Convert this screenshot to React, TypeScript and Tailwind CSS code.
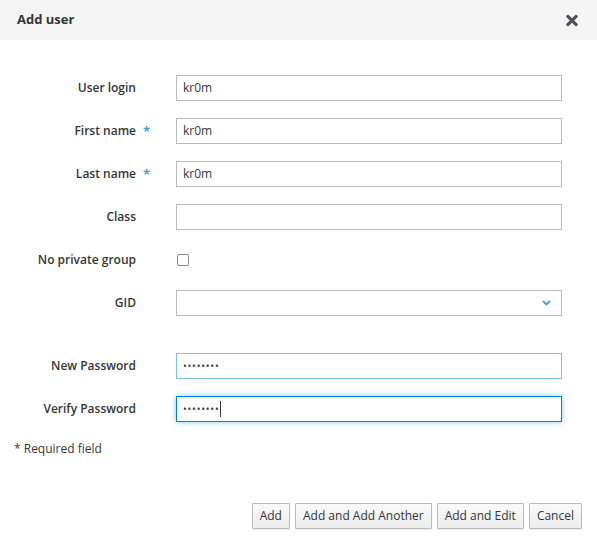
import { FaTimes } from "react-icons/fa";

const font = { fontFamily: '"Open Sans", "Liberation Sans", sans-serif' };

interface RowProps {
  label: string;
  required?: boolean;
  children: React.ReactNode;
  extraGap?: boolean;
}

function Row({ label, required, children, extraGap }: RowProps) {
  return (
    <div className={`flex items-center h-[26px] ${extraGap ? "mb-[37px]" : "mb-[17px]"}`}>
      <div className="w-[136px] text-right text-[12px] font-semibold text-[#363636]">{label}</div>
      <div className="w-[40px] pl-[7px] text-[13px] font-bold text-[#39a5dc] leading-none">
        {required ? "*" : ""}
      </div>
      {children}
    </div>
  );
}

function TextInput({
  value = "",
  type = "text",
  variant = "normal",
}: {
  value?: string;
  type?: string;
  variant?: "normal" | "hover" | "focus";
}) {
  const border =
    variant === "focus"
      ? "border-[#0088ce] shadow-[0_0_6px_rgba(0,136,206,0.45)]"
      : variant === "hover"
      ? "border-[#7dc3e8]"
      : "border-[#bbbbbb]";
  return (
    <div
      className={`w-[386px] h-[26px] border ${border} bg-white px-[6px] flex items-center text-[12px] text-[#363636]`}
    >
      {type === "password" ? (
        <span className="flex items-center">
          <span className="tracking-[0.8px] text-[10px] leading-none">••••••••</span>
          {variant === "focus" && <span className="ml-[1px] w-px h-[16px] bg-[#363636]" />}
        </span>
      ) : (
        <span>{value}</span>
      )}
    </div>
  );
}

export default function App() {
  return (
    <div className="w-[597px] h-[544px] bg-white flex flex-col" style={font}>
      {/* Header */}
      <div className="h-[40px] bg-[#f5f5f5] flex items-center justify-between pl-[17px] pr-[19px]">
        <span className="text-[13px] font-bold text-[#363636]">Add user</span>
        <FaTimes className="text-[#4d5258] w-[12px] h-[17px]" />
      </div>

      {/* Form */}
      <div className="pt-[35px]">
        <Row label="User login">
          <TextInput value="kr0m" />
        </Row>
        <Row label="First name" required>
          <TextInput value="kr0m" />
        </Row>
        <Row label="Last name" required>
          <TextInput value="kr0m" />
        </Row>
        <Row label="Class">
          <TextInput />
        </Row>
        <Row label="No private group">
          <div className="ml-[1px] w-[12px] h-[12px] border border-[#8b8d8f] rounded-[2px] bg-white" />
        </Row>
        <Row label="GID" extraGap>
          <div className="w-[386px] h-[26px] border border-[#bbbbbb] bg-white flex items-center justify-end pr-[10px]">
            <svg width="9" height="6" viewBox="0 0 9 6" fill="none">
              <path d="M1 1l3.5 3.5L8 1" stroke="#39a5dc" strokeWidth="1.8" />
            </svg>
          </div>
        </Row>
        <Row label="New Password">
          <TextInput type="password" variant="hover" />
        </Row>
        <Row label="Verify Password">
          <TextInput type="password" variant="focus" />
        </Row>
        <div className="pl-[14px] pt-[1px] text-[12px] text-[#363636] leading-[18px]">* Required field</div>
      </div>

      {/* Footer */}
      <div className="mt-auto flex justify-end gap-[5px] pr-[15px] pb-[15px]">
        {["Add", "Add and Add Another", "Add and Edit", "Cancel"].map((b) => (
          <button
            key={b}
            type="button"
            className="h-[26px] min-w-[37px] px-[7px] border border-[#bbbbbb] rounded-[1px] bg-gradient-to-b from-[#fafafa] to-[#ededed] text-[12px] text-[#363636] shadow-[0_1px_1px_rgba(3,3,3,0.08)]"
          >
            {b}
          </button>
        ))}
      </div>
    </div>
  );
}
